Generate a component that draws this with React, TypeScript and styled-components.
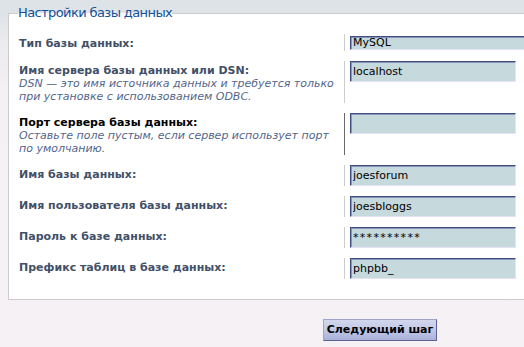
import React from "react";
import styled, { createGlobalStyle } from "styled-components";

const GlobalStyle = createGlobalStyle`
  html, body {
    margin: 0;
    padding: 0;
  }
  body {
    overflow: hidden;
    font-family: "DejaVu Sans", Verdana, sans-serif;
  }
`;

const Page = styled.div`
  width: 524px;
  height: 347px;
  box-sizing: border-box;
  padding: 5px 0 0 8px;
  overflow: hidden;
  background: linear-gradient(
    180deg,
    #dde3e7 0px,
    #dde3e7 13px,
    #ebeaee 40px,
    #f4f0f4 90px,
    #f5f1f5 100%
  );
`;

const Form = styled.form`
  width: 744px;
`;

const Panel = styled.fieldset`
  box-sizing: border-box;
  width: 744px;
  min-width: 0;
  margin: 0;
  padding: 13px 0 20px;
  border: 1px solid #cccccc;
  background: #ffffff;
`;

const Legend = styled.legend`
  margin-left: 9px;
  padding: 0;
  font-size: 13px;
  line-height: 16px;
  letter-spacing: -0.6px;
  color: #115098;
`;

const Row = styled.dl<{ $tall?: boolean }>`
  display: flex;
  margin: 0 0 10px;
  min-height: ${(p) => (p.$tall ? "17px" : "0")};
  &:last-child {
    margin-bottom: 0;
  }
`;

const Term = styled.dt`
  width: 335px;
  flex: none;
  box-sizing: border-box;
  margin: 0;
  padding: 3px 0 0 10px;
`;

const Label = styled.label<{ $active?: boolean }>`
  display: block;
  font-size: 11px;
  line-height: 13px;
  font-weight: bold;
  color: ${(p) => (p.$active ? "#000000" : "#425067")};
`;

const Explain = styled.span`
  display: block;
  font-size: 11px;
  line-height: 13px;
  font-style: italic;
  color: #53658a;
`;

const Field = styled.dd<{ $active?: boolean }>`
  flex: 1;
  margin: 0;
  padding-left: 5px;
  border-left: 1px solid ${(p) => (p.$active ? "#6a6a6a" : "#cccccc")};
`;

const TextInput = styled.input<{ $spaced?: boolean }>`
  display: block;
  box-sizing: border-box;
  width: 166px;
  height: 21px;
  margin: 0;
  padding: 0 2px;
  font-family: "DejaVu Sans", Verdana, sans-serif;
  font-size: 11px;
  letter-spacing: ${(p) => (p.$spaced ? "1.3px" : "0")};
  color: #000000;
  background: #c6d9dd;
  border: 1px solid;
  border-color: #3f4d80 #e4e2f6 #e4e2f6 #3f4d80;
  box-shadow: inset 1px 1px 0 #8794b8;
  outline: none;
`;

const Select = styled.select`
  display: block;
  box-sizing: border-box;
  width: 240px;
  height: 14px;
  margin: 2px 0 1px;
  padding: 0 2px;
  appearance: none;
  font-family: "DejaVu Sans", Verdana, sans-serif;
  font-size: 11px;
  line-height: 12px;
  color: #000000;
  background: #c6d9dd;
  border: 1px solid;
  border-color: #3f4d80 #e4e2f6 #e4e2f6 #3f4d80;
  box-shadow: inset 1px 1px 0 #8794b8;
  border-radius: 0;
  outline: none;
`;

const Submit = styled.div`
  margin-top: 18px;
  text-align: center;
`;

const Button = styled.button`
  box-sizing: border-box;
  width: 114px;
  height: 22px;
  padding: 0;
  font-family: "DejaVu Sans", Verdana, sans-serif;
  font-size: 11px;
  font-weight: bold;
  color: #000000;
  background: linear-gradient(180deg, #d3d7ee 0%, #c2c8e6 50%, #a9b1d9 100%);
  border: 1px solid;
  border-color: #9ea4cc #5d6494 #5d6494 #9ea4cc;
  cursor: pointer;
`;

type Item = {
  id: string;
  label: string;
  explain?: string;
  value: string;
  active?: boolean;
  spaced?: boolean;
};

const fields: Item[] = [
  {
    id: "dbhost",
    label: "Имя сервера базы данных или DSN:",
    explain:
      "DSN — это имя источника данных и требуется только при установке с использованием ODBC.",
    value: "localhost",
  },
  {
    id: "dbport",
    label: "Порт сервера базы данных:",
    explain:
      "Оставьте поле пустым, если сервер использует порт по умолчанию.",
    value: "",
    active: true,
  },
  { id: "dbname", label: "Имя базы данных:", value: "joesforum" },
  { id: "dbuser", label: "Имя пользователя базы данных:", value: "joesbloggs" },
  { id: "dbpasswd", label: "Пароль к базе данных:", value: "**********", spaced: true },
  { id: "table_prefix", label: "Префикс таблиц в базе данных:", value: "phpbb_" },
];

const App = () => {
  return (
    <Page>
      <GlobalStyle />
      <Form onSubmit={(e) => e.preventDefault()}>
        <Panel>
          <Legend>Настройки базы данных</Legend>
          <Row $tall>
            <Term>
              <Label htmlFor="dbms">Тип базы данных:</Label>
            </Term>
            <Field>
              <Select id="dbms" defaultValue="mysql">
                <option value="mysql">MySQL</option>
              </Select>
            </Field>
          </Row>
          {fields.map((f) => (
            <Row key={f.id}>
              <Term>
                <Label htmlFor={f.id} $active={f.active}>
                  {f.label}
                </Label>
                {f.explain && <Explain>{f.explain}</Explain>}
              </Term>
              <Field $active={f.active}>
                <TextInput
                  id={f.id}
                  type="text"
                  defaultValue={f.value}
                  $spaced={f.spaced}
                />
              </Field>
            </Row>
          ))}
        </Panel>
        <Submit>
          <Button type="submit">Следующий шаг</Button>
        </Submit>
      </Form>
    </Page>
  );
};

export default App;
